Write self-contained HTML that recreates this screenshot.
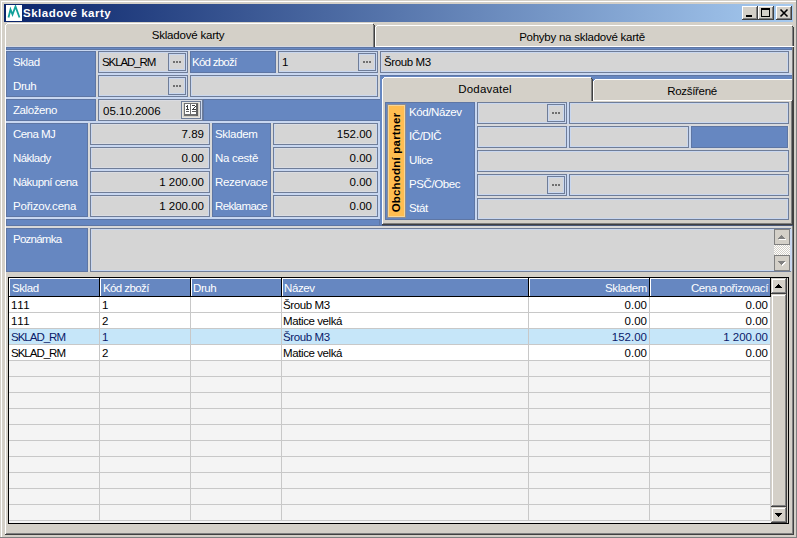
<!DOCTYPE html>
<html><head><meta charset="utf-8"><style>
html,body{margin:0;padding:0;width:797px;height:538px;overflow:hidden;background:#D4D0C8;}
body{position:relative;font-family:"Liberation Sans", sans-serif;font-size:11.5px;}
div,svg{position:absolute;}
.t{white-space:nowrap;line-height:14px;height:14px;letter-spacing:-0.4px;font-size:11.5px;}
</style></head><body>
<div style="left:0px;top:0px;width:797px;height:538px;background:#D4D0C8;"></div>
<div style="left:1px;top:1px;width:795px;height:536px;background:#FFFFFF;"></div>
<div style="left:2px;top:2px;width:794px;height:535px;background:#D4D0C8;"></div>
<div style="left:796px;top:0px;width:1px;height:538px;background:#808080;"></div>
<div style="left:0px;top:537px;width:797px;height:1px;background:#808080;"></div>
<div style="left:4px;top:4px;width:789px;height:18px;background:linear-gradient(to right,#0A246A,#A6CAF0);"></div>
<div style="left:6px;top:5px;width:16px;height:16px;background:#FFFFFF;"></div>
<svg style="left:6px;top:5px" width="16" height="16" viewBox="0 0 16 16"><path d="M2.5 12.5 L4.5 4.5 L6.5 9.5 L9.5 1.5 L13.5 12.5" fill="none" stroke="#12A09A" stroke-width="1.8"/></svg>
<div class="t" style="left:23px;top:6px;color:#fff;font-weight:bold;font-size:11.5px;letter-spacing:0.5px;">Skladové karty</div>
<div style="left:742px;top:6px;width:16px;height:14px;background:#404040;"></div>
<div style="left:742px;top:6px;width:15px;height:13px;background:#FFFFFF;"></div>
<div style="left:743px;top:7px;width:14px;height:12px;background:#808080;"></div>
<div style="left:743px;top:7px;width:13px;height:11px;background:#D4D0C8;"></div>
<div style="left:758px;top:6px;width:16px;height:14px;background:#404040;"></div>
<div style="left:758px;top:6px;width:15px;height:13px;background:#FFFFFF;"></div>
<div style="left:759px;top:7px;width:14px;height:12px;background:#808080;"></div>
<div style="left:759px;top:7px;width:13px;height:11px;background:#D4D0C8;"></div>
<div style="left:776px;top:6px;width:16px;height:14px;background:#404040;"></div>
<div style="left:776px;top:6px;width:15px;height:13px;background:#FFFFFF;"></div>
<div style="left:777px;top:7px;width:14px;height:12px;background:#808080;"></div>
<div style="left:777px;top:7px;width:13px;height:11px;background:#D4D0C8;"></div>
<div style="left:746px;top:15px;width:6px;height:2px;background:#000;"></div>
<div style="left:761px;top:8px;width:9px;height:9px;background:#000;"></div>
<div style="left:762px;top:10px;width:7px;height:6px;background:#D4D0C8;"></div>
<svg style="left:776px;top:6px" width="16" height="14" viewBox="0 0 16 14"><path d="M4.5 3.5 L11.5 10.5 M11.5 3.5 L4.5 10.5" stroke="#000" stroke-width="1.6"/></svg>
<div style="left:5px;top:46px;width:789px;height:489px;background:#404040;"></div>
<div style="left:5px;top:46px;width:788px;height:488px;background:#FFFFFF;"></div>
<div style="left:6px;top:47px;width:787px;height:487px;background:#808080;"></div>
<div style="left:6px;top:47px;width:786px;height:486px;background:#D4D0C8;"></div>
<div style="left:376px;top:26px;width:416px;height:20px;background:#D4D0C8;"></div>
<div style="left:377px;top:25px;width:415px;height:1px;background:#FFFFFF;"></div>
<div style="left:376px;top:26px;width:1px;height:1px;background:#FFFFFF;"></div>
<div style="left:375px;top:27px;width:1px;height:19px;background:#FFFFFF;"></div>
<div style="left:792px;top:26px;width:1px;height:1px;background:#404040;"></div>
<div style="left:792px;top:27px;width:1px;height:19px;background:#808080;"></div>
<div style="left:793px;top:27px;width:1px;height:19px;background:#404040;"></div>
<div style="left:375px;top:46px;width:419px;height:1px;background:#FFFFFF;"></div>
<div style="left:6px;top:24px;width:367px;height:23px;background:#D4D0C8;"></div>
<div style="left:7px;top:23px;width:366px;height:1px;background:#FFFFFF;"></div>
<div style="left:6px;top:24px;width:1px;height:1px;background:#FFFFFF;"></div>
<div style="left:5px;top:25px;width:1px;height:22px;background:#FFFFFF;"></div>
<div style="left:373px;top:24px;width:1px;height:1px;background:#404040;"></div>
<div style="left:373px;top:25px;width:1px;height:22px;background:#808080;"></div>
<div style="left:374px;top:25px;width:1px;height:22px;background:#404040;"></div>
<div class="t" style="left:38px;width:300px;top:28px;color:#000;text-align:center;letter-spacing:-0.2px;">Skladové karty</div>
<div class="t" style="left:432px;width:300px;top:30px;color:#000;text-align:center;letter-spacing:-0.25px;">Pohyby na skladové kartě</div>
<div style="left:6px;top:47px;width:786px;height:179px;background:#6687C1;"></div>
<div style="left:6px;top:47px;width:786px;height:3px;background:#5E76A4;"></div>
<div style="left:7px;top:48px;width:784px;height:1px;background:#6687C1;"></div>
<div style="left:6px;top:46px;width:367px;height:1px;background:#D4D8E2;"></div>
<div style="left:6px;top:50px;width:786px;height:1px;background:#C8D7F1;"></div>
<div style="left:6px;top:219px;width:374px;height:7px;background:#5E76A4;"></div>
<div style="left:7px;top:220px;width:372px;height:5px;background:#6687C1;"></div>
<div style="left:6px;top:51px;width:374px;height:168px;background:#C8D7F1;"></div>
<div style="left:380px;top:51px;width:412px;height:24px;background:#C8D7F1;"></div>
<div style="left:789px;top:51px;width:3px;height:22px;background:#D8D8D8;"></div>
<div style="left:6px;top:51px;width:90px;height:46px;background:#5E76A4;"></div>
<div style="left:7px;top:52px;width:88px;height:44px;background:#6687C1;"></div>
<div class="t" style="left:13px;top:55px;color:#FFF;">Sklad</div>
<div class="t" style="left:13px;top:79px;color:#FFF;">Druh</div>
<div style="left:96px;top:51px;width:2px;height:46px;background:#D8D8D8;"></div>
<div style="left:6px;top:99px;width:90px;height:22px;background:#5E76A4;"></div>
<div style="left:7px;top:100px;width:88px;height:20px;background:#6687C1;"></div>
<div class="t" style="left:13px;top:103px;color:#FFF;">Založeno</div>
<div style="left:96px;top:99px;width:2px;height:22px;background:#D8D8D8;"></div>
<div style="left:6px;top:123px;width:82px;height:94px;background:#5E76A4;"></div>
<div style="left:7px;top:124px;width:80px;height:92px;background:#6687C1;"></div>
<div class="t" style="left:13px;top:127px;color:#FFF;letter-spacing:-0.55px;">Cena MJ</div>
<div class="t" style="left:13px;top:151px;color:#FFF;letter-spacing:-0.55px;">Náklady</div>
<div class="t" style="left:13px;top:175px;color:#FFF;letter-spacing:-0.55px;">Nákupní cena</div>
<div class="t" style="left:13px;top:199px;color:#FFF;letter-spacing:-0.2px;">Pořizov.cena</div>
<div style="left:88px;top:123px;width:2px;height:94px;background:#D8D8D8;"></div>
<div style="left:190px;top:51px;width:86px;height:22px;background:#5E76A4;"></div>
<div style="left:191px;top:52px;width:84px;height:20px;background:#6687C1;"></div>
<div class="t" style="left:192px;top:55px;color:#FFF;letter-spacing:-0.75px;">Kód zboží</div>
<div style="left:188px;top:51px;width:2px;height:46px;background:#D8D8D8;"></div>
<div style="left:276px;top:51px;width:2px;height:22px;background:#D8D8D8;"></div>
<div style="left:212px;top:123px;width:59px;height:94px;background:#5E76A4;"></div>
<div style="left:213px;top:124px;width:57px;height:92px;background:#6687C1;"></div>
<div class="t" style="left:215px;top:127px;color:#FFF;letter-spacing:-0.3px;">Skladem</div>
<div class="t" style="left:215px;top:151px;color:#FFF;letter-spacing:-0.3px;">Na cestě</div>
<div class="t" style="left:215px;top:175px;color:#FFF;letter-spacing:-0.3px;">Rezervace</div>
<div class="t" style="left:215px;top:199px;color:#FFF;letter-spacing:-0.6px;">Reklamace</div>
<div style="left:210px;top:123px;width:2px;height:94px;background:#D8D8D8;"></div>
<div style="left:271px;top:123px;width:2px;height:94px;background:#D8D8D8;"></div>
<div style="left:378px;top:51px;width:2px;height:46px;background:#D8D8D8;"></div>
<div style="left:98px;top:51px;width:90px;height:22px;background:#6F7D98;"></div>
<div style="left:99px;top:52px;width:88px;height:20px;background:#C9D7EF;"></div>
<div style="left:100px;top:53px;width:86px;height:18px;background:#D5D5D5;"></div>
<div class="t" style="left:102px;top:55px;color:#000;letter-spacing:-1.1px;">SKLAD_RM</div>
<div style="left:168px;top:53px;width:18px;height:18px;background:#6F7D98;"></div>
<div style="left:169px;top:54px;width:16px;height:16px;background:#C9D7EF;"></div>
<div style="left:170px;top:55px;width:14px;height:14px;background:#D5D5D5;"></div>
<div style="left:173px;top:61px;width:2px;height:2px;background:#707070;"></div>
<div style="left:176px;top:61px;width:2px;height:2px;background:#707070;"></div>
<div style="left:179px;top:61px;width:2px;height:2px;background:#707070;"></div>
<div style="left:98px;top:75px;width:90px;height:22px;background:#6F7D98;"></div>
<div style="left:99px;top:76px;width:88px;height:20px;background:#C9D7EF;"></div>
<div style="left:100px;top:77px;width:86px;height:18px;background:#D5D5D5;"></div>
<div style="left:168px;top:77px;width:18px;height:18px;background:#6F7D98;"></div>
<div style="left:169px;top:78px;width:16px;height:16px;background:#C9D7EF;"></div>
<div style="left:170px;top:79px;width:14px;height:14px;background:#D5D5D5;"></div>
<div style="left:173px;top:85px;width:2px;height:2px;background:#707070;"></div>
<div style="left:176px;top:85px;width:2px;height:2px;background:#707070;"></div>
<div style="left:179px;top:85px;width:2px;height:2px;background:#707070;"></div>
<div style="left:278px;top:51px;width:100px;height:22px;background:#6F7D98;"></div>
<div style="left:279px;top:52px;width:98px;height:20px;background:#C9D7EF;"></div>
<div style="left:280px;top:53px;width:96px;height:18px;background:#D5D5D5;"></div>
<div class="t" style="left:282px;top:55px;color:#000;">1</div>
<div style="left:358px;top:53px;width:18px;height:18px;background:#6F7D98;"></div>
<div style="left:359px;top:54px;width:16px;height:16px;background:#C9D7EF;"></div>
<div style="left:360px;top:55px;width:14px;height:14px;background:#D5D5D5;"></div>
<div style="left:363px;top:61px;width:2px;height:2px;background:#707070;"></div>
<div style="left:366px;top:61px;width:2px;height:2px;background:#707070;"></div>
<div style="left:369px;top:61px;width:2px;height:2px;background:#707070;"></div>
<div style="left:190px;top:75px;width:188px;height:22px;background:#6F7D98;"></div>
<div style="left:191px;top:76px;width:186px;height:20px;background:#C9D7EF;"></div>
<div style="left:192px;top:77px;width:184px;height:18px;background:#D5D5D5;"></div>
<div style="left:98px;top:99px;width:105px;height:22px;background:#6F7D98;"></div>
<div style="left:99px;top:100px;width:103px;height:20px;background:#C9D7EF;"></div>
<div style="left:100px;top:100px;width:101px;height:1px;background:#DADCE2;"></div>
<div style="left:100px;top:119px;width:101px;height:1px;background:#DADCE2;"></div>
<div style="left:100px;top:101px;width:101px;height:18px;background:#D5D5D5;"></div>
<div class="t" style="left:103px;top:104px;color:#000;letter-spacing:0px;">05.10.2006</div>
<div style="left:181px;top:101px;width:20px;height:18px;background:#6F7D98;"></div>
<div style="left:182px;top:102px;width:18px;height:16px;background:#E8E6E0;"></div>
<div style="left:183px;top:103px;width:16px;height:14px;background:#D4D0C8;"></div>
<div style="left:184px;top:103px;width:14px;height:13px;background:#707070;"></div>
<div style="left:185px;top:104px;width:5px;height:10px;background:#FFFFFF;"></div>
<div style="left:191px;top:104px;width:5px;height:10px;background:#FFFFFF;"></div>
<div style="left:196px;top:104px;width:2px;height:12px;background:#606060;"></div>
<div style="left:187px;top:105px;width:1px;height:5px;background:#404040;"></div>
<div style="left:186px;top:106px;width:1px;height:1px;background:#404040;"></div>
<div style="left:186px;top:109px;width:3px;height:1px;background:#404040;"></div>
<div style="left:186px;top:111px;width:3px;height:1px;background:#606060;"></div>
<div style="left:192px;top:105px;width:3px;height:1px;background:#404040;"></div>
<div style="left:195px;top:106px;width:1px;height:1px;background:#404040;"></div>
<div style="left:194px;top:107px;width:1px;height:1px;background:#404040;"></div>
<div style="left:193px;top:108px;width:1px;height:1px;background:#404040;"></div>
<div style="left:192px;top:109px;width:4px;height:1px;background:#404040;"></div>
<div style="left:192px;top:111px;width:4px;height:1px;background:#606060;"></div>
<div style="left:203px;top:99px;width:177px;height:22px;background:#5E76A4;"></div>
<div style="left:204px;top:100px;width:176px;height:20px;background:#6687C1;"></div>
<div style="left:380px;top:51px;width:409px;height:22px;background:#6F7D98;"></div>
<div style="left:381px;top:52px;width:407px;height:20px;background:#C9D7EF;"></div>
<div style="left:382px;top:53px;width:405px;height:18px;background:#D5D5D5;"></div>
<div class="t" style="left:384px;top:55px;color:#000;">Šroub M3</div>
<div style="left:90px;top:123px;width:120px;height:22px;background:#6F7D98;"></div>
<div style="left:91px;top:124px;width:118px;height:20px;background:#C9D7EF;"></div>
<div style="left:92px;top:124px;width:116px;height:1px;background:#DADCE2;"></div>
<div style="left:92px;top:143px;width:116px;height:1px;background:#DADCE2;"></div>
<div style="left:92px;top:125px;width:116px;height:18px;background:#D5D5D5;"></div>
<div class="t" style="right:593px;top:127px;color:#000;text-align:right;letter-spacing:0px;">7.89</div>
<div style="left:273px;top:123px;width:105px;height:22px;background:#6F7D98;"></div>
<div style="left:274px;top:124px;width:103px;height:20px;background:#C9D7EF;"></div>
<div style="left:275px;top:124px;width:101px;height:1px;background:#DADCE2;"></div>
<div style="left:275px;top:143px;width:101px;height:1px;background:#DADCE2;"></div>
<div style="left:275px;top:125px;width:101px;height:18px;background:#D5D5D5;"></div>
<div class="t" style="right:425px;top:127px;color:#000;text-align:right;letter-spacing:0px;">152.00</div>
<div style="left:90px;top:147px;width:120px;height:22px;background:#6F7D98;"></div>
<div style="left:91px;top:148px;width:118px;height:20px;background:#C9D7EF;"></div>
<div style="left:92px;top:148px;width:116px;height:1px;background:#DADCE2;"></div>
<div style="left:92px;top:167px;width:116px;height:1px;background:#DADCE2;"></div>
<div style="left:92px;top:149px;width:116px;height:18px;background:#D5D5D5;"></div>
<div class="t" style="right:593px;top:151px;color:#000;text-align:right;letter-spacing:0px;">0.00</div>
<div style="left:273px;top:147px;width:105px;height:22px;background:#6F7D98;"></div>
<div style="left:274px;top:148px;width:103px;height:20px;background:#C9D7EF;"></div>
<div style="left:275px;top:148px;width:101px;height:1px;background:#DADCE2;"></div>
<div style="left:275px;top:167px;width:101px;height:1px;background:#DADCE2;"></div>
<div style="left:275px;top:149px;width:101px;height:18px;background:#D5D5D5;"></div>
<div class="t" style="right:425px;top:151px;color:#000;text-align:right;letter-spacing:0px;">0.00</div>
<div style="left:90px;top:171px;width:120px;height:22px;background:#6F7D98;"></div>
<div style="left:91px;top:172px;width:118px;height:20px;background:#C9D7EF;"></div>
<div style="left:92px;top:172px;width:116px;height:1px;background:#DADCE2;"></div>
<div style="left:92px;top:191px;width:116px;height:1px;background:#DADCE2;"></div>
<div style="left:92px;top:173px;width:116px;height:18px;background:#D5D5D5;"></div>
<div class="t" style="right:593px;top:175px;color:#000;text-align:right;letter-spacing:0px;">1 200.00</div>
<div style="left:273px;top:171px;width:105px;height:22px;background:#6F7D98;"></div>
<div style="left:274px;top:172px;width:103px;height:20px;background:#C9D7EF;"></div>
<div style="left:275px;top:172px;width:101px;height:1px;background:#DADCE2;"></div>
<div style="left:275px;top:191px;width:101px;height:1px;background:#DADCE2;"></div>
<div style="left:275px;top:173px;width:101px;height:18px;background:#D5D5D5;"></div>
<div class="t" style="right:425px;top:175px;color:#000;text-align:right;letter-spacing:0px;">0.00</div>
<div style="left:90px;top:195px;width:120px;height:22px;background:#6F7D98;"></div>
<div style="left:91px;top:196px;width:118px;height:20px;background:#C9D7EF;"></div>
<div style="left:92px;top:196px;width:116px;height:1px;background:#DADCE2;"></div>
<div style="left:92px;top:215px;width:116px;height:1px;background:#DADCE2;"></div>
<div style="left:92px;top:197px;width:116px;height:18px;background:#D5D5D5;"></div>
<div class="t" style="right:593px;top:199px;color:#000;text-align:right;letter-spacing:0px;">1 200.00</div>
<div style="left:273px;top:195px;width:105px;height:22px;background:#6F7D98;"></div>
<div style="left:274px;top:196px;width:103px;height:20px;background:#C9D7EF;"></div>
<div style="left:275px;top:196px;width:101px;height:1px;background:#DADCE2;"></div>
<div style="left:275px;top:215px;width:101px;height:1px;background:#DADCE2;"></div>
<div style="left:275px;top:197px;width:101px;height:18px;background:#D5D5D5;"></div>
<div class="t" style="right:425px;top:199px;color:#000;text-align:right;letter-spacing:0px;">0.00</div>
<div style="left:380px;top:75px;width:412px;height:151px;background:#5E76A4;"></div>
<div style="left:380px;top:76px;width:412px;height:149px;background:#6687C1;"></div>
<div style="left:382px;top:100px;width:411px;height:125px;background:#404040;"></div>
<div style="left:382px;top:100px;width:410px;height:124px;background:#FFFFFF;"></div>
<div style="left:383px;top:101px;width:409px;height:123px;background:#808080;"></div>
<div style="left:383px;top:101px;width:408px;height:122px;background:#D4D0C8;"></div>
<div style="left:382px;top:225px;width:411px;height:1px;background:#4A5878;"></div>
<div style="left:594px;top:80px;width:198px;height:20px;background:#D4D0C8;"></div>
<div style="left:595px;top:79px;width:197px;height:1px;background:#FFFFFF;"></div>
<div style="left:594px;top:80px;width:1px;height:1px;background:#FFFFFF;"></div>
<div style="left:593px;top:81px;width:1px;height:19px;background:#FFFFFF;"></div>
<div style="left:593px;top:100px;width:199px;height:1px;background:#FFFFFF;"></div>
<div style="left:383px;top:78px;width:208px;height:24px;background:#D4D0C8;"></div>
<div style="left:384px;top:77px;width:207px;height:1px;background:#FFFFFF;"></div>
<div style="left:383px;top:78px;width:1px;height:1px;background:#FFFFFF;"></div>
<div style="left:382px;top:79px;width:1px;height:23px;background:#FFFFFF;"></div>
<div style="left:591px;top:78px;width:1px;height:1px;background:#404040;"></div>
<div style="left:591px;top:79px;width:1px;height:22px;background:#808080;"></div>
<div style="left:592px;top:79px;width:1px;height:22px;background:#404040;"></div>
<div class="t" style="left:335px;width:300px;top:82px;color:#000;text-align:center;letter-spacing:0.2px;">Dodavatel</div>
<div class="t" style="left:542px;width:300px;top:84px;color:#000;text-align:center;letter-spacing:-0.3px;">Rozšířené</div>
<div style="left:385px;top:102px;width:404px;height:118px;background:#D8D9DC;"></div>
<div style="left:475px;top:102px;width:2px;height:118px;background:#C8D7F1;"></div>
<div style="left:567px;top:102px;width:2px;height:22px;background:#C8D7F1;"></div>
<div style="left:567px;top:126px;width:2px;height:22px;background:#C8D7F1;"></div>
<div style="left:567px;top:174px;width:2px;height:22px;background:#C8D7F1;"></div>
<div style="left:689px;top:126px;width:2px;height:22px;background:#C8D7F1;"></div>
<div style="left:385px;top:102px;width:90px;height:118px;background:#5E76A4;"></div>
<div style="left:386px;top:103px;width:88px;height:116px;background:#6687C1;"></div>
<div style="left:387px;top:104px;width:19px;height:114px;background:#8C8C92;"></div>
<div style="left:388px;top:105px;width:17px;height:112px;background:#F4D69A;"></div>
<div style="left:389px;top:106px;width:15px;height:110px;background:#FFBD50;"></div>
<div class="t" style="left:387px;top:218px;width:111px;height:18px;line-height:18px;transform-origin:0 0;transform:rotate(-90deg);font-weight:bold;text-align:center;color:#000;letter-spacing:0.2px;">Obchodní partner</div>
<div class="t" style="left:409px;top:105px;color:#FFF;">Kód/Název</div>
<div class="t" style="left:409px;top:129px;color:#FFF;">IČ/DIČ</div>
<div class="t" style="left:409px;top:153px;color:#FFF;">Ulice</div>
<div class="t" style="left:409px;top:177px;color:#FFF;">PSČ/Obec</div>
<div class="t" style="left:409px;top:201px;color:#FFF;">Stát</div>
<div style="left:477px;top:102px;width:90px;height:22px;background:#6F7D98;"></div>
<div style="left:478px;top:103px;width:88px;height:20px;background:#C9D7EF;"></div>
<div style="left:479px;top:104px;width:86px;height:18px;background:#D5D5D5;"></div>
<div style="left:547px;top:104px;width:18px;height:18px;background:#6F7D98;"></div>
<div style="left:548px;top:105px;width:16px;height:16px;background:#C9D7EF;"></div>
<div style="left:549px;top:106px;width:14px;height:14px;background:#D5D5D5;"></div>
<div style="left:552px;top:112px;width:2px;height:2px;background:#707070;"></div>
<div style="left:555px;top:112px;width:2px;height:2px;background:#707070;"></div>
<div style="left:558px;top:112px;width:2px;height:2px;background:#707070;"></div>
<div style="left:569px;top:102px;width:220px;height:22px;background:#6F7D98;"></div>
<div style="left:570px;top:103px;width:218px;height:20px;background:#C9D7EF;"></div>
<div style="left:571px;top:104px;width:216px;height:18px;background:#D5D5D5;"></div>
<div style="left:477px;top:126px;width:90px;height:22px;background:#6F7D98;"></div>
<div style="left:478px;top:127px;width:88px;height:20px;background:#C9D7EF;"></div>
<div style="left:479px;top:128px;width:86px;height:18px;background:#D5D5D5;"></div>
<div style="left:569px;top:126px;width:120px;height:22px;background:#6F7D98;"></div>
<div style="left:570px;top:127px;width:118px;height:20px;background:#C9D7EF;"></div>
<div style="left:571px;top:128px;width:116px;height:18px;background:#D5D5D5;"></div>
<div style="left:691px;top:126px;width:97px;height:22px;background:#5E76A4;"></div>
<div style="left:692px;top:127px;width:95px;height:20px;background:#6687C1;"></div>
<div style="left:788px;top:126px;width:1px;height:22px;background:#E4E2DC;"></div>
<div style="left:477px;top:150px;width:312px;height:22px;background:#6F7D98;"></div>
<div style="left:478px;top:151px;width:310px;height:20px;background:#C9D7EF;"></div>
<div style="left:479px;top:152px;width:308px;height:18px;background:#D5D5D5;"></div>
<div style="left:477px;top:174px;width:90px;height:22px;background:#6F7D98;"></div>
<div style="left:478px;top:175px;width:88px;height:20px;background:#C9D7EF;"></div>
<div style="left:479px;top:176px;width:86px;height:18px;background:#D5D5D5;"></div>
<div style="left:547px;top:176px;width:18px;height:18px;background:#6F7D98;"></div>
<div style="left:548px;top:177px;width:16px;height:16px;background:#C9D7EF;"></div>
<div style="left:549px;top:178px;width:14px;height:14px;background:#D5D5D5;"></div>
<div style="left:552px;top:184px;width:2px;height:2px;background:#707070;"></div>
<div style="left:555px;top:184px;width:2px;height:2px;background:#707070;"></div>
<div style="left:558px;top:184px;width:2px;height:2px;background:#707070;"></div>
<div style="left:569px;top:174px;width:220px;height:22px;background:#6F7D98;"></div>
<div style="left:570px;top:175px;width:218px;height:20px;background:#C9D7EF;"></div>
<div style="left:571px;top:176px;width:216px;height:18px;background:#D5D5D5;"></div>
<div style="left:477px;top:198px;width:312px;height:22px;background:#6F7D98;"></div>
<div style="left:478px;top:199px;width:310px;height:20px;background:#C9D7EF;"></div>
<div style="left:479px;top:200px;width:308px;height:18px;background:#D5D5D5;"></div>
<div style="left:6px;top:226px;width:786px;height:2px;background:#D8D8D8;"></div>
<div style="left:6px;top:228px;width:82px;height:44px;background:#5E76A4;"></div>
<div style="left:7px;top:229px;width:80px;height:42px;background:#6687C1;"></div>
<div class="t" style="left:13px;top:232px;color:#FFF;letter-spacing:-0.75px;">Poznámka</div>
<div style="left:88px;top:228px;width:2px;height:44px;background:#D8D8D8;"></div>
<div style="left:90px;top:228px;width:701px;height:44px;background:#6F7D98;"></div>
<div style="left:91px;top:229px;width:699px;height:42px;background:#C9D7EF;"></div>
<div style="left:92px;top:230px;width:697px;height:40px;background:#D5D5D5;"></div>
<div style="left:774px;top:245px;width:16px;height:10px;background-color:#FFFFFF;background-image:linear-gradient(45deg,#D4D0C8 25%,transparent 25%,transparent 75%,#D4D0C8 75%),linear-gradient(45deg,#D4D0C8 25%,transparent 25%,transparent 75%,#D4D0C8 75%);background-size:2px 2px;background-position:0 0,1px 1px;"></div>
<div style="left:790px;top:229px;width:2px;height:42px;background:#C9D7EF;"></div>
<div style="left:774px;top:229px;width:16px;height:16px;background:#808080;"></div>
<div style="left:775px;top:230px;width:14px;height:14px;background:#D4D0C8;"></div>
<div style="left:774px;top:255px;width:16px;height:16px;background:#808080;"></div>
<div style="left:775px;top:256px;width:14px;height:14px;background:#D4D0C8;"></div>
<div style="left:782px;top:236px;width:1px;height:1px;background:#FFFFFF;"></div>
<div style="left:781px;top:237px;width:3px;height:1px;background:#FFFFFF;"></div>
<div style="left:780px;top:238px;width:5px;height:1px;background:#FFFFFF;"></div>
<div style="left:779px;top:239px;width:7px;height:1px;background:#FFFFFF;"></div>
<div style="left:781px;top:235px;width:1px;height:1px;background:#808080;"></div>
<div style="left:780px;top:236px;width:3px;height:1px;background:#808080;"></div>
<div style="left:779px;top:237px;width:5px;height:1px;background:#808080;"></div>
<div style="left:778px;top:238px;width:7px;height:1px;background:#808080;"></div>
<div style="left:779px;top:262px;width:7px;height:1px;background:#FFFFFF;"></div>
<div style="left:780px;top:263px;width:5px;height:1px;background:#FFFFFF;"></div>
<div style="left:781px;top:264px;width:3px;height:1px;background:#FFFFFF;"></div>
<div style="left:782px;top:265px;width:1px;height:1px;background:#FFFFFF;"></div>
<div style="left:778px;top:261px;width:7px;height:1px;background:#808080;"></div>
<div style="left:779px;top:262px;width:5px;height:1px;background:#808080;"></div>
<div style="left:780px;top:263px;width:3px;height:1px;background:#808080;"></div>
<div style="left:781px;top:264px;width:1px;height:1px;background:#808080;"></div>
<div style="left:8px;top:277px;width:781px;height:247px;background:#000000;"></div>
<div style="left:9px;top:278px;width:779px;height:245px;background:#F4F4F4;"></div>
<div style="left:9px;top:278px;width:762px;height:19px;background:#000;"></div>
<div style="left:9px;top:278px;width:761px;height:18px;background:#6687C1;"></div>
<div style="left:9px;top:278px;width:761px;height:1px;background:#FFF;"></div>
<div style="left:9px;top:278px;width:1px;height:18px;background:#FFF;"></div>
<div style="left:99px;top:278px;width:1px;height:19px;background:#000;"></div>
<div style="left:100px;top:279px;width:1px;height:17px;background:#FFF;"></div>
<div style="left:190px;top:278px;width:1px;height:19px;background:#000;"></div>
<div style="left:191px;top:279px;width:1px;height:17px;background:#FFF;"></div>
<div style="left:281px;top:278px;width:1px;height:19px;background:#000;"></div>
<div style="left:282px;top:279px;width:1px;height:17px;background:#FFF;"></div>
<div style="left:528px;top:278px;width:1px;height:19px;background:#000;"></div>
<div style="left:529px;top:279px;width:1px;height:17px;background:#FFF;"></div>
<div style="left:649px;top:278px;width:1px;height:19px;background:#000;"></div>
<div style="left:650px;top:279px;width:1px;height:17px;background:#FFF;"></div>
<div style="left:770px;top:278px;width:1px;height:19px;background:#000;"></div>
<div class="t" style="left:12px;top:281px;color:#FFF;">Sklad</div>
<div class="t" style="left:103px;top:281px;color:#FFF;letter-spacing:-0.6px;">Kód zboží</div>
<div class="t" style="left:193px;top:281px;color:#FFF;">Druh</div>
<div class="t" style="left:284px;top:281px;color:#FFF;">Název</div>
<div class="t" style="right:150px;top:281px;color:#FFF;text-align:right;">Skladem</div>
<div class="t" style="right:29px;top:281px;color:#FFF;text-align:right;">Cena pořizovací</div>
<div style="left:9px;top:297px;width:761px;height:15px;background:#FFFFFF;"></div>
<div style="left:9px;top:312px;width:762px;height:1px;background:#C8C8C8;"></div>
<div style="left:99px;top:297px;width:1px;height:16px;background:#C8C8C8;"></div>
<div style="left:190px;top:297px;width:1px;height:16px;background:#C8C8C8;"></div>
<div style="left:281px;top:297px;width:1px;height:16px;background:#C8C8C8;"></div>
<div style="left:528px;top:297px;width:1px;height:16px;background:#C8C8C8;"></div>
<div style="left:649px;top:297px;width:1px;height:16px;background:#C8C8C8;"></div>
<div style="left:770px;top:297px;width:1px;height:16px;background:#C8C8C8;"></div>
<div class="t" style="left:11px;top:298px;color:#000;letter-spacing:0.6px;">111</div>
<div class="t" style="left:102px;top:298px;color:#000;">1</div>
<div class="t" style="left:283px;top:298px;color:#000;">Šroub M3</div>
<div class="t" style="right:150px;top:298px;color:#000;text-align:right;letter-spacing:0px;">0.00</div>
<div class="t" style="right:29px;top:298px;color:#000;text-align:right;letter-spacing:0px;">0.00</div>
<div style="left:9px;top:313px;width:761px;height:15px;background:#FFFFFF;"></div>
<div style="left:9px;top:328px;width:762px;height:1px;background:#C8C8C8;"></div>
<div style="left:99px;top:313px;width:1px;height:16px;background:#C8C8C8;"></div>
<div style="left:190px;top:313px;width:1px;height:16px;background:#C8C8C8;"></div>
<div style="left:281px;top:313px;width:1px;height:16px;background:#C8C8C8;"></div>
<div style="left:528px;top:313px;width:1px;height:16px;background:#C8C8C8;"></div>
<div style="left:649px;top:313px;width:1px;height:16px;background:#C8C8C8;"></div>
<div style="left:770px;top:313px;width:1px;height:16px;background:#C8C8C8;"></div>
<div class="t" style="left:11px;top:314px;color:#000;letter-spacing:0.6px;">111</div>
<div class="t" style="left:102px;top:314px;color:#000;">2</div>
<div class="t" style="left:283px;top:314px;color:#000;">Matice velká</div>
<div class="t" style="right:150px;top:314px;color:#000;text-align:right;letter-spacing:0px;">0.00</div>
<div class="t" style="right:29px;top:314px;color:#000;text-align:right;letter-spacing:0px;">0.00</div>
<div style="left:9px;top:329px;width:761px;height:15px;background:#C6E6F9;"></div>
<div style="left:9px;top:344px;width:762px;height:1px;background:#C8C8C8;"></div>
<div style="left:99px;top:329px;width:1px;height:16px;background:#C8C8C8;"></div>
<div style="left:190px;top:329px;width:1px;height:16px;background:#C8C8C8;"></div>
<div style="left:281px;top:329px;width:1px;height:16px;background:#C8C8C8;"></div>
<div style="left:528px;top:329px;width:1px;height:16px;background:#C8C8C8;"></div>
<div style="left:649px;top:329px;width:1px;height:16px;background:#C8C8C8;"></div>
<div style="left:770px;top:329px;width:1px;height:16px;background:#C8C8C8;"></div>
<div class="t" style="left:11px;top:330px;color:#0A1A6A;letter-spacing:-1.0px;">SKLAD_RM</div>
<div class="t" style="left:102px;top:330px;color:#0A1A6A;">1</div>
<div class="t" style="left:283px;top:330px;color:#0A1A6A;">Šroub M3</div>
<div class="t" style="right:150px;top:330px;color:#0A1A6A;text-align:right;letter-spacing:0px;">152.00</div>
<div class="t" style="right:29px;top:330px;color:#0A1A6A;text-align:right;letter-spacing:0px;">1 200.00</div>
<div style="left:9px;top:345px;width:761px;height:15px;background:#FFFFFF;"></div>
<div style="left:9px;top:360px;width:762px;height:1px;background:#C8C8C8;"></div>
<div style="left:99px;top:345px;width:1px;height:16px;background:#C8C8C8;"></div>
<div style="left:190px;top:345px;width:1px;height:16px;background:#C8C8C8;"></div>
<div style="left:281px;top:345px;width:1px;height:16px;background:#C8C8C8;"></div>
<div style="left:528px;top:345px;width:1px;height:16px;background:#C8C8C8;"></div>
<div style="left:649px;top:345px;width:1px;height:16px;background:#C8C8C8;"></div>
<div style="left:770px;top:345px;width:1px;height:16px;background:#C8C8C8;"></div>
<div class="t" style="left:11px;top:346px;color:#000;letter-spacing:-1.0px;">SKLAD_RM</div>
<div class="t" style="left:102px;top:346px;color:#000;">2</div>
<div class="t" style="left:283px;top:346px;color:#000;">Matice velká</div>
<div class="t" style="right:150px;top:346px;color:#000;text-align:right;letter-spacing:0px;">0.00</div>
<div class="t" style="right:29px;top:346px;color:#000;text-align:right;letter-spacing:0px;">0.00</div>
<div style="left:9px;top:361px;width:761px;height:15px;background:#F4F4F4;"></div>
<div style="left:9px;top:376px;width:762px;height:1px;background:#C8C8C8;"></div>
<div style="left:99px;top:361px;width:1px;height:16px;background:#C8C8C8;"></div>
<div style="left:190px;top:361px;width:1px;height:16px;background:#C8C8C8;"></div>
<div style="left:281px;top:361px;width:1px;height:16px;background:#C8C8C8;"></div>
<div style="left:528px;top:361px;width:1px;height:16px;background:#C8C8C8;"></div>
<div style="left:649px;top:361px;width:1px;height:16px;background:#C8C8C8;"></div>
<div style="left:770px;top:361px;width:1px;height:16px;background:#C8C8C8;"></div>
<div style="left:9px;top:377px;width:761px;height:15px;background:#F4F4F4;"></div>
<div style="left:9px;top:392px;width:762px;height:1px;background:#C8C8C8;"></div>
<div style="left:99px;top:377px;width:1px;height:16px;background:#C8C8C8;"></div>
<div style="left:190px;top:377px;width:1px;height:16px;background:#C8C8C8;"></div>
<div style="left:281px;top:377px;width:1px;height:16px;background:#C8C8C8;"></div>
<div style="left:528px;top:377px;width:1px;height:16px;background:#C8C8C8;"></div>
<div style="left:649px;top:377px;width:1px;height:16px;background:#C8C8C8;"></div>
<div style="left:770px;top:377px;width:1px;height:16px;background:#C8C8C8;"></div>
<div style="left:9px;top:393px;width:761px;height:15px;background:#F4F4F4;"></div>
<div style="left:9px;top:408px;width:762px;height:1px;background:#C8C8C8;"></div>
<div style="left:99px;top:393px;width:1px;height:16px;background:#C8C8C8;"></div>
<div style="left:190px;top:393px;width:1px;height:16px;background:#C8C8C8;"></div>
<div style="left:281px;top:393px;width:1px;height:16px;background:#C8C8C8;"></div>
<div style="left:528px;top:393px;width:1px;height:16px;background:#C8C8C8;"></div>
<div style="left:649px;top:393px;width:1px;height:16px;background:#C8C8C8;"></div>
<div style="left:770px;top:393px;width:1px;height:16px;background:#C8C8C8;"></div>
<div style="left:9px;top:409px;width:761px;height:15px;background:#F4F4F4;"></div>
<div style="left:9px;top:424px;width:762px;height:1px;background:#C8C8C8;"></div>
<div style="left:99px;top:409px;width:1px;height:16px;background:#C8C8C8;"></div>
<div style="left:190px;top:409px;width:1px;height:16px;background:#C8C8C8;"></div>
<div style="left:281px;top:409px;width:1px;height:16px;background:#C8C8C8;"></div>
<div style="left:528px;top:409px;width:1px;height:16px;background:#C8C8C8;"></div>
<div style="left:649px;top:409px;width:1px;height:16px;background:#C8C8C8;"></div>
<div style="left:770px;top:409px;width:1px;height:16px;background:#C8C8C8;"></div>
<div style="left:9px;top:425px;width:761px;height:15px;background:#F4F4F4;"></div>
<div style="left:9px;top:440px;width:762px;height:1px;background:#C8C8C8;"></div>
<div style="left:99px;top:425px;width:1px;height:16px;background:#C8C8C8;"></div>
<div style="left:190px;top:425px;width:1px;height:16px;background:#C8C8C8;"></div>
<div style="left:281px;top:425px;width:1px;height:16px;background:#C8C8C8;"></div>
<div style="left:528px;top:425px;width:1px;height:16px;background:#C8C8C8;"></div>
<div style="left:649px;top:425px;width:1px;height:16px;background:#C8C8C8;"></div>
<div style="left:770px;top:425px;width:1px;height:16px;background:#C8C8C8;"></div>
<div style="left:9px;top:441px;width:761px;height:15px;background:#F4F4F4;"></div>
<div style="left:9px;top:456px;width:762px;height:1px;background:#C8C8C8;"></div>
<div style="left:99px;top:441px;width:1px;height:16px;background:#C8C8C8;"></div>
<div style="left:190px;top:441px;width:1px;height:16px;background:#C8C8C8;"></div>
<div style="left:281px;top:441px;width:1px;height:16px;background:#C8C8C8;"></div>
<div style="left:528px;top:441px;width:1px;height:16px;background:#C8C8C8;"></div>
<div style="left:649px;top:441px;width:1px;height:16px;background:#C8C8C8;"></div>
<div style="left:770px;top:441px;width:1px;height:16px;background:#C8C8C8;"></div>
<div style="left:9px;top:457px;width:761px;height:15px;background:#F4F4F4;"></div>
<div style="left:9px;top:472px;width:762px;height:1px;background:#C8C8C8;"></div>
<div style="left:99px;top:457px;width:1px;height:16px;background:#C8C8C8;"></div>
<div style="left:190px;top:457px;width:1px;height:16px;background:#C8C8C8;"></div>
<div style="left:281px;top:457px;width:1px;height:16px;background:#C8C8C8;"></div>
<div style="left:528px;top:457px;width:1px;height:16px;background:#C8C8C8;"></div>
<div style="left:649px;top:457px;width:1px;height:16px;background:#C8C8C8;"></div>
<div style="left:770px;top:457px;width:1px;height:16px;background:#C8C8C8;"></div>
<div style="left:9px;top:473px;width:761px;height:15px;background:#F4F4F4;"></div>
<div style="left:9px;top:488px;width:762px;height:1px;background:#C8C8C8;"></div>
<div style="left:99px;top:473px;width:1px;height:16px;background:#C8C8C8;"></div>
<div style="left:190px;top:473px;width:1px;height:16px;background:#C8C8C8;"></div>
<div style="left:281px;top:473px;width:1px;height:16px;background:#C8C8C8;"></div>
<div style="left:528px;top:473px;width:1px;height:16px;background:#C8C8C8;"></div>
<div style="left:649px;top:473px;width:1px;height:16px;background:#C8C8C8;"></div>
<div style="left:770px;top:473px;width:1px;height:16px;background:#C8C8C8;"></div>
<div style="left:9px;top:489px;width:761px;height:15px;background:#F4F4F4;"></div>
<div style="left:9px;top:504px;width:762px;height:1px;background:#C8C8C8;"></div>
<div style="left:99px;top:489px;width:1px;height:16px;background:#C8C8C8;"></div>
<div style="left:190px;top:489px;width:1px;height:16px;background:#C8C8C8;"></div>
<div style="left:281px;top:489px;width:1px;height:16px;background:#C8C8C8;"></div>
<div style="left:528px;top:489px;width:1px;height:16px;background:#C8C8C8;"></div>
<div style="left:649px;top:489px;width:1px;height:16px;background:#C8C8C8;"></div>
<div style="left:770px;top:489px;width:1px;height:16px;background:#C8C8C8;"></div>
<div style="left:9px;top:505px;width:761px;height:15px;background:#F4F4F4;"></div>
<div style="left:9px;top:520px;width:762px;height:1px;background:#C8C8C8;"></div>
<div style="left:99px;top:505px;width:1px;height:16px;background:#C8C8C8;"></div>
<div style="left:190px;top:505px;width:1px;height:16px;background:#C8C8C8;"></div>
<div style="left:281px;top:505px;width:1px;height:16px;background:#C8C8C8;"></div>
<div style="left:528px;top:505px;width:1px;height:16px;background:#C8C8C8;"></div>
<div style="left:649px;top:505px;width:1px;height:16px;background:#C8C8C8;"></div>
<div style="left:770px;top:505px;width:1px;height:16px;background:#C8C8C8;"></div>
<div style="left:771px;top:278px;width:17px;height:245px;background:#D4D0C8;"></div>
<div style="left:771px;top:278px;width:16px;height:16px;background:#404040;"></div>
<div style="left:771px;top:278px;width:15px;height:15px;background:#D4D0C8;"></div>
<div style="left:772px;top:279px;width:14px;height:14px;background:#808080;"></div>
<div style="left:772px;top:279px;width:13px;height:13px;background:#FFFFFF;"></div>
<div style="left:773px;top:280px;width:12px;height:12px;background:#D4D0C8;"></div>
<div style="left:771px;top:294px;width:16px;height:213px;background:#404040;"></div>
<div style="left:771px;top:294px;width:15px;height:212px;background:#D4D0C8;"></div>
<div style="left:772px;top:295px;width:14px;height:211px;background:#808080;"></div>
<div style="left:772px;top:295px;width:13px;height:210px;background:#FFFFFF;"></div>
<div style="left:773px;top:296px;width:12px;height:209px;background:#D4D0C8;"></div>
<div style="left:771px;top:507px;width:16px;height:16px;background:#404040;"></div>
<div style="left:771px;top:507px;width:15px;height:15px;background:#D4D0C8;"></div>
<div style="left:772px;top:508px;width:14px;height:14px;background:#808080;"></div>
<div style="left:772px;top:508px;width:13px;height:13px;background:#FFFFFF;"></div>
<div style="left:773px;top:509px;width:12px;height:12px;background:#D4D0C8;"></div>
<div style="left:778px;top:284px;width:1px;height:1px;background:#000;"></div>
<div style="left:775px;top:513px;width:7px;height:1px;background:#000;"></div>
<div style="left:777px;top:285px;width:3px;height:1px;background:#000;"></div>
<div style="left:776px;top:514px;width:5px;height:1px;background:#000;"></div>
<div style="left:776px;top:286px;width:5px;height:1px;background:#000;"></div>
<div style="left:777px;top:515px;width:3px;height:1px;background:#000;"></div>
<div style="left:775px;top:287px;width:7px;height:1px;background:#000;"></div>
<div style="left:778px;top:516px;width:1px;height:1px;background:#000;"></div>
</body></html>
